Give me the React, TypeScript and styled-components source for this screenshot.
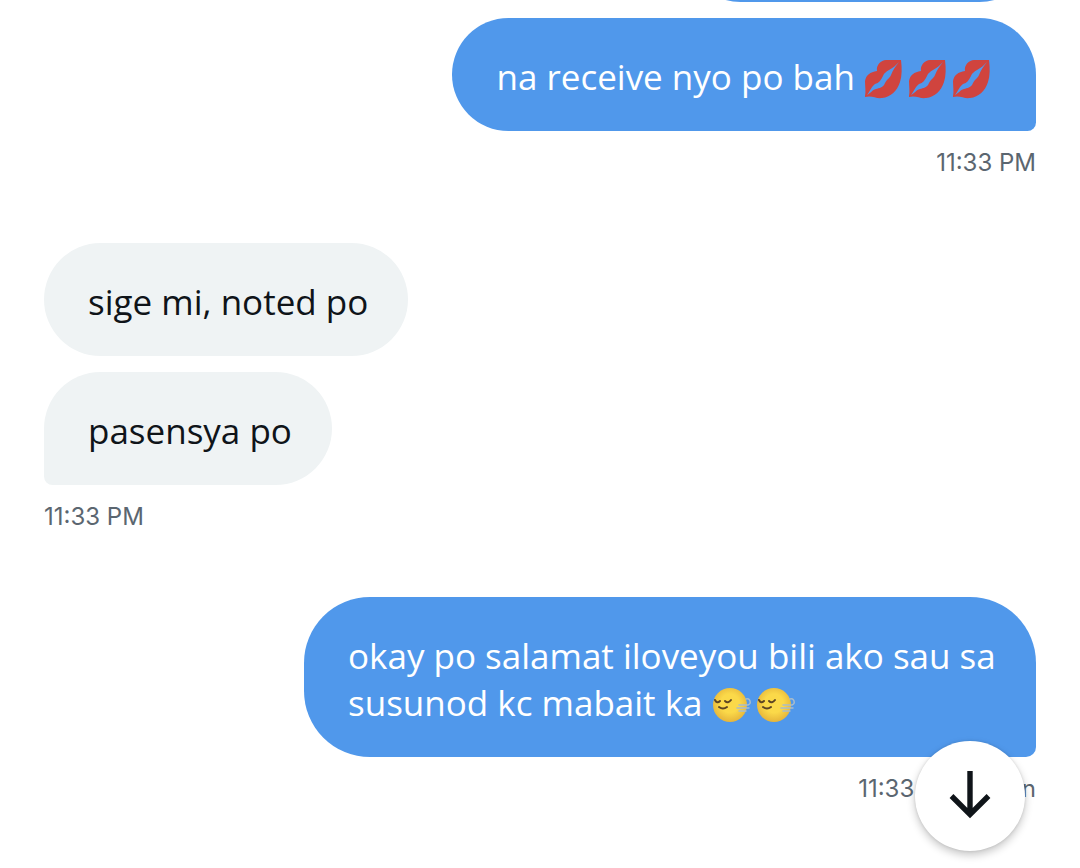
import React from "react";
import styled, { createGlobalStyle, css } from "styled-components";

const GlobalStyle = createGlobalStyle`
  *, *::before, *::after { box-sizing: border-box; }
  body {
    margin: 0;
    background: #ffffff;
    font-family: "Open Sans", "Noto Sans", sans-serif;
  }
`;

type Side = "sent" | "received";

const Screen = styled.main`
  position: relative;
  display: flex;
  flex-direction: column;
  justify-content: flex-end;
  height: 100vh;
  overflow: hidden;
`;

const Thread = styled.div`
  display: flex;
  flex-direction: column;
  gap: 64px;
  padding: 0 44px 63px;
`;

const Group = styled.section<{ $side: Side }>`
  display: flex;
  flex-direction: column;
  align-items: ${({ $side }) => ($side === "sent" ? "flex-end" : "flex-start")};
  gap: 16px;
`;

const Bubble = styled.div<{ $side: Side; $tail?: boolean }>`
  min-width: 113px;
  max-width: 732px;
  min-height: 113px;
  padding: 35px 40px 31px 44px;
  border-radius: 66px;
  font-size: 35px;
  line-height: 47px;
  ${({ $side }) =>
    $side === "sent"
      ? css`background: #5098eb; color: #ffffff;`
      : css`background: #eff3f4; color: #0f1419;`}
  ${({ $side, $tail }) =>
    $tail &&
    ($side === "sent"
      ? css`border-bottom-right-radius: 10px;`
      : css`border-bottom-left-radius: 10px;`)}
`;

const ClippedBubble = styled(Bubble)`
  width: 352px;
`;

const Stamp = styled.time`
  color: #5b6670;
  font-family: Inter, sans-serif;
  font-size: 24px;
  line-height: 32px;
`;

const Emoji = styled.svg`
  width: 40px;
  height: 40px;
  margin-right: 4px;
  vertical-align: -9px;
`;

const ScrollButton = styled.button`
  position: absolute;
  right: 55px;
  bottom: 17px;
  display: grid;
  place-items: center;
  width: 110px;
  height: 110px;
  padding: 0;
  border: 0;
  border-radius: 50%;
  background: #ffffff;
  box-shadow: 0 4px 8px rgba(0, 0, 0, 0.22), 0 0 3px rgba(0, 0, 0, 0.12);
  cursor: pointer;
`;

const Lips = () => (
  <Emoji viewBox="0 0 40 40" role="img" aria-label="kiss mark">
    <path
      fill="#d0443e"
      d="M1 37 C2 33 1 27 1 22 C2 16 6 13 13 12 C12 6 17 1 22 1 L37 1 C38 9 38 17 36 23 C33 32 27 38 18 39 C12 40 8 36 1 38Z"
    />
    <path
      fill="#5098eb"
      d="M3 36 C6 32 8 27 11 25 C15 24 17 21 19 17 C20 14 22 13 25 11 C29 9 32 6 35 3 C31 8 29 11 27 16 C26 19 23 20 21 24 C19 29 15 29 12 30 C8 31 7 34 3 36Z"
    />
  </Emoji>
);

const Exhale = () => (
  <Emoji viewBox="0 0 40 40" role="img" aria-label="relieved face exhaling">
    <defs>
      <radialGradient id="skin" cx="50%" cy="45%" r="55%">
        <stop offset="50%" stopColor="#fbd949" />
        <stop offset="100%" stopColor="#e6b53a" />
      </radialGradient>
    </defs>
    <circle cx="18" cy="20" r="17" fill="url(#skin)" />
    <g fill="none" stroke="#5d4524" strokeWidth="2" strokeLinecap="round">
      <path d="M3 15 Q5 19 8 16" />
      <path d="M13 16 Q16 19 19 15" />
      <path d="M7 22 Q11 25 15 22" />
    </g>
    <g fill="none" stroke="#a9bccb" strokeWidth="1.500" strokeLinecap="round">
      <path d="M27 20 H36 Q39 19 38 16 Q37 13 34 14" />
      <path d="M25 23 H37" />
      <path d="M27 26 H34" />
    </g>
  </Emoji>
);

const ArrowDown = () => (
  <svg width="42" height="50" viewBox="0 0 42 50" fill="none" aria-hidden="true">
    <path d="M21 0 V43 M2.500 25 L21 43.500 L39.500 25" stroke="#0f1419" strokeWidth="5.400" />
  </svg>
);

export default function App() {
  return (
    <Screen>
      <GlobalStyle />
      <Thread>
        <Group $side="sent">
          <ClippedBubble $side="sent" />
          <Bubble $side="sent" $tail>
            na receive nyo po bah <Lips /><Lips /><Lips />
          </Bubble>
          <Stamp>11:33 PM</Stamp>
        </Group>
        <Group $side="received">
          <Bubble $side="received">sige mi, noted po</Bubble>
          <Bubble $side="received" $tail>pasensya po</Bubble>
          <Stamp>11:33 PM</Stamp>
        </Group>
        <Group $side="sent">
          <Bubble $side="sent" $tail>
            okay po salamat iloveyou bili ako sau sa susunod kc mabait ka <Exhale /><Exhale />
          </Bubble>
          <Stamp>11:33 PM · Seen</Stamp>
        </Group>
      </Thread>
      <ScrollButton type="button" aria-label="Scroll to latest message">
        <ArrowDown />
      </ScrollButton>
    </Screen>
  );
}
